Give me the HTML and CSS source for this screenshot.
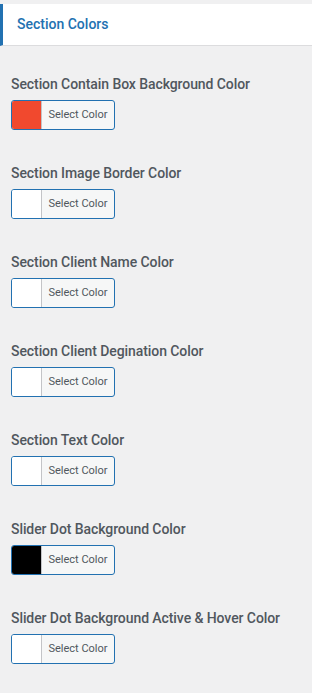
FILE: index.html
```html
<!DOCTYPE html>
<html lang="en">

<head>
    <meta charset="UTF-8">
    <meta name="viewport" content="width=device-width, initial-scale=1.0">
    <title>Section Colors</title>
    <link rel="stylesheet" href="styles.css">
</head>

<body>
    <div class="panel">
        <!-- section heading -->
        <h3 class="panel-title">Section Colors</h3>

        <!-- color controls -->
        <ul class="controls">
            <li class="control">
                <span class="control-label">Section Contain Box Background Color</span>
                <button class="color-btn" type="button">
                    <span class="swatch swatch-red"></span>
                    <span class="btn-text">Select Color</span>
                </button>
            </li>
            <li class="control">
                <span class="control-label">Section Image Border Color</span>
                <button class="color-btn" type="button">
                    <span class="swatch"></span>
                    <span class="btn-text">Select Color</span>
                </button>
            </li>
            <li class="control">
                <span class="control-label">Section Client Name Color</span>
                <button class="color-btn" type="button">
                    <span class="swatch"></span>
                    <span class="btn-text">Select Color</span>
                </button>
            </li>
            <li class="control">
                <span class="control-label">Section Client Degination Color</span>
                <button class="color-btn" type="button">
                    <span class="swatch"></span>
                    <span class="btn-text">Select Color</span>
                </button>
            </li>
            <li class="control">
                <span class="control-label">Section Text Color</span>
                <button class="color-btn" type="button">
                    <span class="swatch"></span>
                    <span class="btn-text">Select Color</span>
                </button>
            </li>
            <li class="control">
                <span class="control-label">Slider Dot Background Color</span>
                <button class="color-btn" type="button">
                    <span class="swatch swatch-black"></span>
                    <span class="btn-text">Select Color</span>
                </button>
            </li>
            <li class="control">
                <span class="control-label">Slider Dot Background Active &amp; Hover Color</span>
                <button class="color-btn" type="button">
                    <span class="swatch"></span>
                    <span class="btn-text">Select Color</span>
                </button>
            </li>
        </ul>
    </div>
</body>

</html>
```

FILE: styles.css
```css
* {
    margin: 0;
    padding: 0;
    box-sizing: border-box;
}

body {
    background: #f0f0f1;
    font-family: Roboto, "Liberation Sans", sans-serif;
}

ul li {
    list-style: none;
}

.panel {
    padding-top: 4px;
}

.panel-title {
    height: 42px;
    padding-left: 14px;
    background: #fff;
    border-left: 3px solid #2271b1;
    border-bottom: 1px solid #dcdcde;
    color: #2271b1;
    font-size: 14px;
    font-weight: 500;
    line-height: 41px;
}

.controls {
    padding: 28px 11px 0;
}

.control {
    display: flex;
    flex-direction: column;
    align-items: flex-start;
    gap: 6px;
    margin-bottom: 33px;
}

.control-label {
    color: #50575e;
    font-size: 14px;
    font-weight: 500;
    line-height: 20px;
    letter-spacing: -0.08px;
}

.color-btn {
    display: flex;
    width: 104px;
    height: 30px;
    overflow: hidden;
    background: #f6f7f7;
    border: 1px solid #2271b1;
    border-radius: 3px;
    font-family: inherit;
    cursor: pointer;
}

.swatch {
    width: 30px;
    height: 100%;
    background: #fff;
    border-right: 1px solid #c3c4c7;
}

.swatch-red {
    background: #f1492e;
}

.swatch-black {
    background: #000;
}

.btn-text {
    flex: 1;
    color: #50575e;
    font-size: 11px;
    line-height: 27px;
    text-align: center;
}
```
